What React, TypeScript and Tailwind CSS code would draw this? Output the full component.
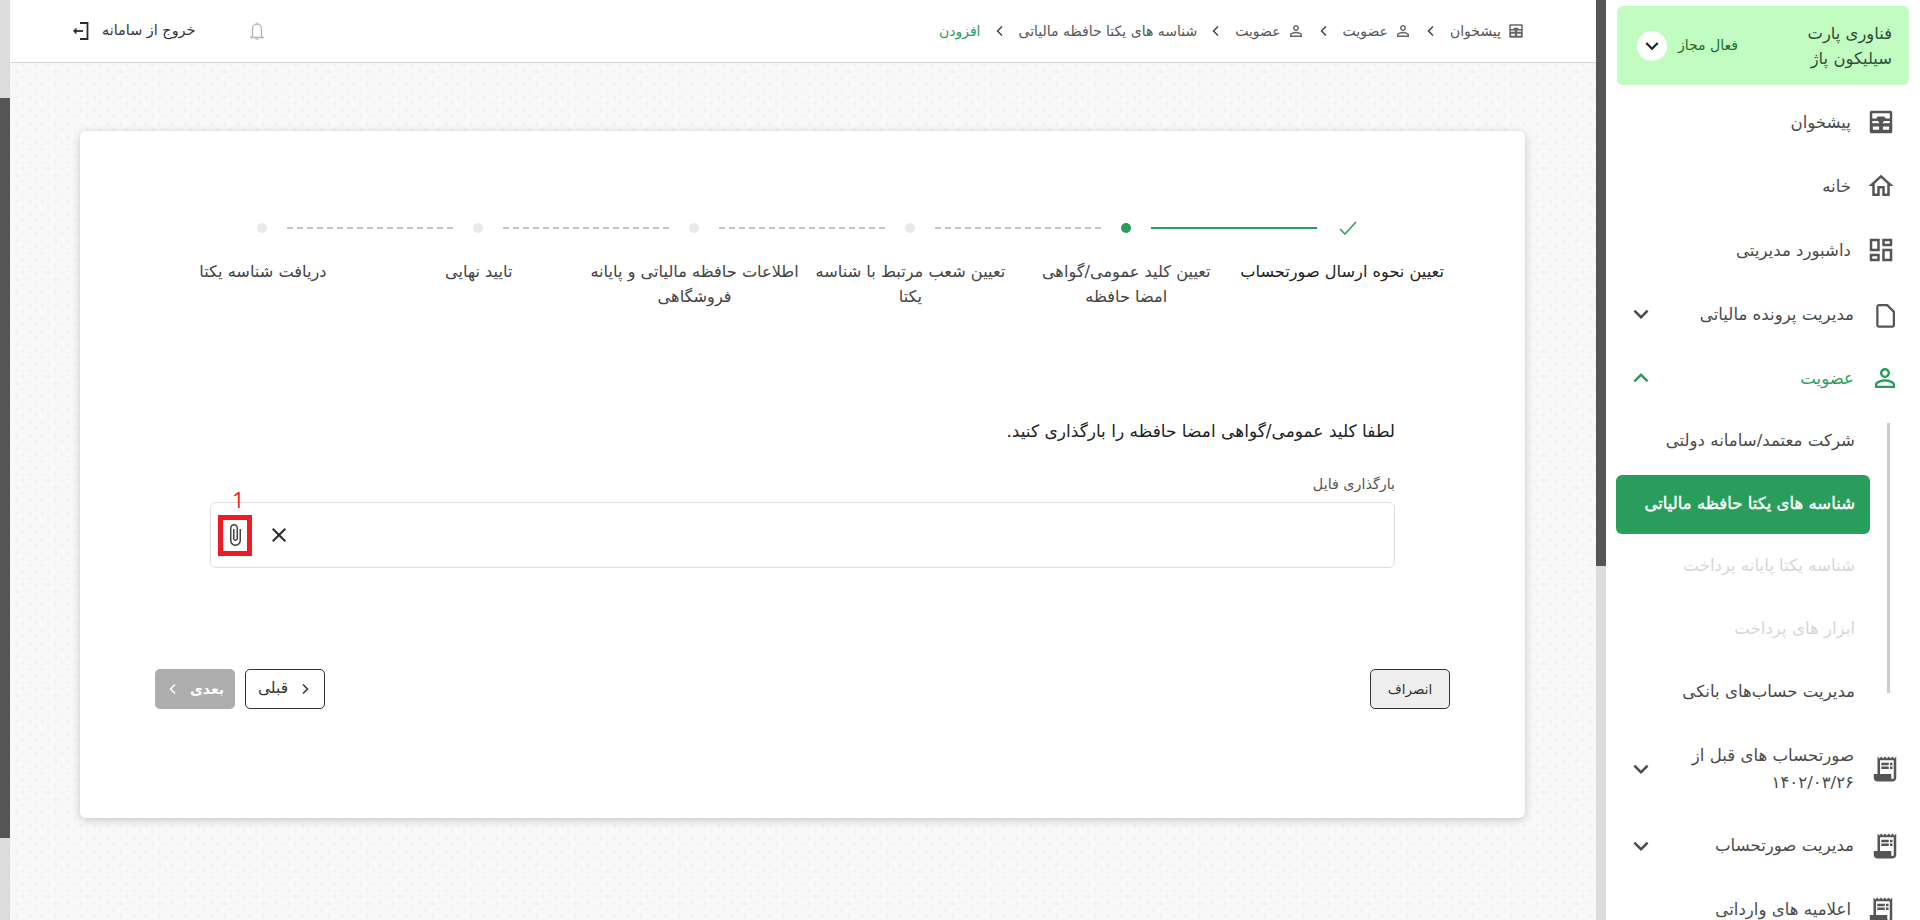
import React from "react";

const P = {
  home: "M12 5.69l5 4.5V18h-2v-6H9v6H7v-7.81l5-4.5M12 3L2 12h3v8h6v-6h2v6h6v-8h3L12 3z",
  dash: "M19 5v2h-4V5h4M9 5v6H5V5h4m10 8v6h-4v-6h4M9 17v2H5v-2h4M21 3h-8v6h8V3zM11 3H3v10h8V3zm10 8h-8v10h8V11zm-10 4H3v6h8v-6z",
  person:
    "M12 5.9c1.16 0 2.1.94 2.1 2.1s-.94 2.1-2.1 2.1S9.9 9.16 9.9 8s.94-2.1 2.1-2.1m0 9c2.97 0 6.1 1.46 6.1 2.1v1.1H5.9V17c0-.64 3.13-2.1 6.1-2.1M12 4C9.79 4 8 5.79 8 8s1.79 4 4 4 4-1.79 4-4-1.79-4-4-4zm0 9c-2.67 0-8 1.34-8 4v3h16v-3c0-2.66-5.33-4-8-4z",
  receipt:
    "M19.5 3.5 18 2l-1.5 1.5L15 2l-1.5 1.5L12 2l-1.5 1.5L9 2 7.5 3.5 6 2v14H3v3c0 1.66 1.34 3 3 3h12c1.66 0 3-1.34 3-3V2l-1.5 1.5zM19 19c0 .55-.45 1-1 1s-1-.45-1-1v-3H8V5h11v14zM15 7H9v2h6V7zM18 7h-2v2h2V7zM15 10H9v2h6v-2zM18 10h-2v2h2v-2z",
  file: "M14.2 4H7.2C6 4 5 5 5 6.2V21c0 1.1 1 2 2.2 2h10.6c1.2 0 2.2-.9 2.2-2V9.8L14.2 4zM18.2 21.2H6.8V5.8h6.6l4.8 4.8v10.6z",
  more: "M16.59 8.59 12 13.17 7.41 8.59 6 10l6 6 6-6z",
  less: "m12 8-6 6 1.41 1.41L12 10.83l4.59 4.58L18 14z",
  clip: "M16.5 6v11.5c0 2.21-1.79 4-4 4s-4-1.79-4-4V5c0-1.38 1.12-2.5 2.5-2.5s2.5 1.12 2.5 2.5v10.5c0 .55-.45 1-1 1s-1-.45-1-1V6H10v9.5c0 1.38 1.12 2.5 2.5 2.5s2.5-1.12 2.5-2.5V5c0-2.21-1.79-4-4-4S7 2.79 7 5v12.5c0 3.04 2.46 5.5 5.5 5.5s5.5-2.46 5.5-5.5V6h-1.5z",
  close:
    "M19 6.41 17.59 5 12 10.59 6.41 5 5 6.41 10.59 12 5 17.59 6.41 19 12 13.41 17.59 19 19 17.59 13.41 12z",
};

function Mi({ d, size = 30, className = "" }: { d: string; size?: number; className?: string }) {
  return (
    <svg width={size} height={size} viewBox="0 0 24 24" fill="currentColor" className={`shrink-0 ${className}`}>
      <path d={d} />
    </svg>
  );
}

function Chev({ dir, className = "" }: { dir: "left" | "right"; className?: string }) {
  return (
    <svg width="14" height="14" viewBox="0 0 14 14" fill="none" stroke="currentColor" strokeWidth="1.5" className={`shrink-0 ${className}`}>
      <path d={dir === "right" ? "M5 2.5 9.5 7 5 11.5" : "M9 2.5 4.5 7 9 11.5"} />
    </svg>
  );
}

function Desk({ size = 30, className = "" }: { size?: number; className?: string }) {
  return (
    <svg width={size} height={size} viewBox="0 0 24 24" fill="currentColor" className={`shrink-0 ${className}`}>
      <path
        fillRule="evenodd"
        d="M4.5 3h15A1.5 1.5 0 0 1 21 4.5v15a1.5 1.5 0 0 1-1.5 1.5h-15A1.5 1.5 0 0 1 3 19.5v-15A1.5 1.5 0 0 1 4.5 3zM5 5v4.2h3.2l1.2-1.7h5.2l1.2 1.7H19V5zM5 11.2V13h5.8l-1.2-1.8zM19 11.2h-4.6L13.2 13H19zM5.5 15.6v2.6h5v-2.6zM13.5 15.6v2.6h5v-2.6z"
      />
    </svg>
  );
}

function Step({ state, last }: { state: "done" | "active" | "todo"; last: boolean }) {
  return (
    <>
      <div className="flex h-5 w-5 shrink-0 items-center justify-center">
        {state === "done" && (
          <svg width="18" height="14" viewBox="0 0 18 14" fill="none" stroke="#299e5c" strokeWidth="1.5" className="shrink-0 translate-x-[6px]">
            <path d="M1 8l5 5L17 1" />
          </svg>
        )}
        {state === "active" && <span className="h-[10px] w-[10px] rounded-full bg-[#299e5c]" />}
        {state === "todo" && <span className="h-[10px] w-[10px] rounded-full bg-[#e8e8ee]" />}
      </div>
      {!last &&
        (state === "done" ? (
          <div className="mx-[15px] h-[2px] w-[166px] shrink-0 bg-[#299e5c]" />
        ) : (
          <div className="mx-[15px] h-0 w-[166px] shrink-0 border-t-2 border-dashed border-[#c4c4c4]" />
        ))}
    </>
  );
}

const steps: { s: "done" | "active" | "todo"; a: string; b?: string }[] = [
  { s: "done", a: "تعیین نحوه ارسال صورتحساب" },
  { s: "active", a: "تعیین کلید عمومی/گواهی", b: "امضا حافظه" },
  { s: "todo", a: "تعیین شعب مرتبط با شناسه", b: "یکتا" },
  { s: "todo", a: "اطلاعات حافظه مالیاتی و پایانه", b: "فروشگاهی" },
  { s: "todo", a: "تایید نهایی" },
  { s: "todo", a: "دریافت شناسه یکتا" },
];

function Crumb({ children, green }: { children: React.ReactNode; green?: boolean }) {
  return <span className={`text-[14px] ${green ? "text-[#299e5c]" : "text-[#555]"}`}>{children}</span>;
}

function Sep() {
  return <Chev dir="left" className="mx-[12px] text-[#444]" />;
}

function NavRow({
  icon,
  children,
  chevron,
  tall,
  green,
  inset,
}: {
  icon: React.ReactNode;
  children: React.ReactNode;
  chevron?: "more" | "less";
  tall?: boolean;
  green?: boolean;
  inset?: boolean;
}) {
  return (
    <div
      className={`flex shrink-0 items-center ${tall ? "h-[90px]" : "h-16"} ${inset ? "pr-6" : "pr-5"} pl-5 ${
        green ? "text-[#299e5c]" : "text-[#4a4a4a]"
      }`}
    >
      <span className={`${green ? "text-[#299e5c]" : "text-[#555]"} flex shrink-0`}>{icon}</span>
      <span className={`text-[16.6px] leading-[27px] ${inset ? "mr-[15px]" : "mr-4"}`}>{children}</span>
      {chevron && <Mi d={P[chevron]} className={`mr-auto ${green ? "text-[#299e5c]" : "text-[#4a4a4a]"}`} />}
    </div>
  );
}

function SubRow({ children, tone }: { children: React.ReactNode; tone?: "active" | "off" }) {
  if (tone === "active") {
    return (
      <div className="flex h-[62.75px] items-center">
        <div className="flex h-[59px] w-full items-center rounded-md bg-[#299e5c] pr-[15px] text-[16.5px] text-white [-webkit-text-stroke:0.4px_white]">{children}</div>
      </div>
    );
  }
  return (
    <div className={`flex h-[62.75px] items-center pr-[15px] text-[16.6px] ${tone === "off" ? "text-[#d6d6d6]" : "text-[#4a4a4a]"}`}>{children}</div>
  );
}

export default function App() {
  return (
    <div dir="ltr" className="flex h-[920px] w-[1920px] overflow-hidden bg-white font-['DejaVu_Sans',sans-serif]">
      {/* left scrollbar */}
      <div className="flex w-[10px] shrink-0 flex-col bg-[#dcdcdc]">
        <div className="h-[98px] shrink-0" />
        <div className="h-[740px] shrink-0 bg-[#555]" />
      </div>

      {/* main */}
      <div className="flex min-w-0 flex-1 flex-col bg-[#f7f8f7] bg-[radial-gradient(#eff0ef_1px,transparent_1.5px),radial-gradient(#f0f1f0_1px,transparent_1.5px)] bg-[length:13px_13px] bg-[position:0_0,6px_6px]">
        <header className="flex h-[63px] shrink-0 items-center justify-between border-b border-[#d6d6d6] bg-white pl-[61px] pr-[71px]">
          <div className="flex items-center">
            <svg width="18" height="18" viewBox="0 0 18 18" fill="none" stroke="#2b2b2b" strokeWidth="1.8" className="shrink-0">
              <path d="M9 1h7.5v16H9" />
              <path d="M12 9H3" />
              <path d="M5.5 5.5 2 9l3.5 3.5" fill="#2b2b2b" stroke="none" />
            </svg>
            <span dir="rtl" className="ml-[13px] text-[14.4px] text-[#333]">خروج از سامانه</span>
            <svg width="20" height="20" viewBox="0 0 20 20" fill="none" stroke="#b4b4b4" strokeWidth="1.3" className="ml-[52px] shrink-0">
              <path d="M10 1.5V3M5.5 15V8a4.5 5 0 0 1 9 0v7l1.5 1.5H4z" />
              <path d="M8.5 18h3" />
            </svg>
          </div>
          <nav dir="rtl" className="flex items-center">
            <Desk size={18} className="ml-[6px] text-[#666]" />
            <Crumb>پیشخوان</Crumb>
            <Sep />
            <Mi d={P.person} size={18} className="ml-[6px] text-[#666]" />
            <Crumb>عضویت</Crumb>
            <Sep />
            <Mi d={P.person} size={18} className="ml-[6px] text-[#666]" />
            <Crumb>عضویت</Crumb>
            <Sep />
            <Crumb>شناسه های یکتا حافظه مالیاتی</Crumb>
            <Sep />
            <Crumb green>افزودن</Crumb>
          </nav>
        </header>

        <div className="px-[70px] pt-[68px]">
          <section dir="rtl" className="h-[687px] w-[1445px] rounded-md bg-white px-[75px] pt-[87px] shadow-[0_2px_10px_rgba(0,0,0,0.2)]">
            <div className="flex h-5 items-center px-[98px]">
              {steps.map((st, i) => (
                <Step key={i} state={st.s} last={i === steps.length - 1} />
              ))}
            </div>
            <div className="mt-[22px] grid h-[50px] grid-cols-6">
              {steps.map((st, i) => (
                <div key={i} className="text-center text-[16.2px] leading-[24.5px] text-[#444] first:text-[#222]">
                  {st.a}
                  {st.b && <br />}
                  {st.b}
                </div>
              ))}
            </div>

            <div className="mx-[55px] mt-[109px]">
              <p className="text-[17px] leading-6 text-[#222]">لطفا کلید عمومی/گواهی امضا حافظه را بارگذاری کنید.</p>
              <label className="mt-[31px] block text-[14.3px] leading-5 text-[#555]">بارگذاری فایل</label>
              <div dir="ltr" className="mt-2 flex h-[66px] items-center rounded-md border border-[#dedede] pl-[7px]">
                <div className="relative flex h-[41px] w-[34px] shrink-0 items-center justify-center border-[5px] border-[#ed1c24]">
                  <Mi d={P.clip} size={24} className="text-[#444]" />
                  <span className="absolute left-[9px] top-[-36px] font-['Open_Sans',sans-serif] text-[22px] leading-[30px] text-[#ed1c24]">1</span>
                </div>
                <Mi d={P.close} size={24} className="ml-[15px] text-[#2b2b2b]" />
              </div>
            </div>

            <div className="mt-[101px] flex items-center justify-between">
              <button className="flex h-10 w-20 items-center justify-center rounded-[5px] border border-[#333] bg-[#eeeeee] text-[13.5px] text-[#333]">انصراف</button>
              <div className="flex items-center gap-[10px]">
                <button className="flex h-10 w-20 items-center justify-center gap-[10px] rounded-[5px] border border-[#333] text-[15.5px] text-[#333]">
                  <Chev dir="right" />
                  قبلی
                </button>
                <button className="flex h-10 w-20 items-center justify-center gap-[10px] rounded-[5px] bg-[#adadad] text-[14px] font-bold text-white">
                  بعدی
                  <Chev dir="left" />
                </button>
              </div>
            </div>
          </section>
        </div>
      </div>

      {/* right scrollbar */}
      <div className="flex w-[10px] shrink-0 flex-col bg-[#dcdcdc]">
        <div className="h-[566px] shrink-0 bg-[#555]" />
      </div>

      {/* sidebar */}
      <aside dir="rtl" className="flex h-[920px] w-[314px] shrink-0 flex-col overflow-hidden bg-white">
        <div className="mx-[11px] mt-[6px] flex h-[79px] shrink-0 items-center rounded-md bg-[#c1fcc1] pl-5 pr-[17px]">
          <div className="text-[16.4px] leading-[25px] text-[#2f4f35]">
            فناوری پارت
            <br />
            سیلیکون پاژ
          </div>
          <span className="mr-auto text-[14px] text-[#1b6b2c]">فعال مجاز</span>
          <span className="mr-[11px] flex h-[30px] w-[30px] shrink-0 items-center justify-center rounded-full bg-white text-[#222]">
            <Mi d={P.more} size={26} />
          </span>
        </div>

        <div className="mt-[5px] flex flex-col">
          <NavRow inset icon={<Desk />}>پیشخوان</NavRow>
          <NavRow inset icon={<Mi d={P.home} />}>خانه</NavRow>
          <NavRow inset icon={<Mi d={P.dash} />}>داشبورد مدیریتی</NavRow>
          <NavRow icon={<Mi d={P.file} />} chevron="more">مدیریت پرونده مالیاتی</NavRow>
          <NavRow green icon={<Mi d={P.person} />} chevron="less">عضویت</NavRow>
          <div className="flex shrink-0">
            <div className="mb-[31px] mr-[30px] mt-[13px] w-[3px] shrink-0 bg-[#cccccc]" />
            <div className="mr-[17px] min-w-0 flex-1 pl-[10px]">
              <SubRow>شرکت معتمد/سامانه دولتی</SubRow>
              <SubRow tone="active">شناسه های یکتا حافظه مالیاتی</SubRow>
              <SubRow tone="off">شناسه یکتا پایانه پرداخت</SubRow>
              <SubRow tone="off">ابزار های پرداخت</SubRow>
              <SubRow>مدیریت حساب‌های بانکی</SubRow>
            </div>
          </div>
          <NavRow tall icon={<Mi d={P.receipt} />} chevron="more">
            صورتحساب های قبل از
            <br />
            ۱۴۰۲/۰۳/۲۶
          </NavRow>
          <NavRow icon={<Mi d={P.receipt} />} chevron="more">مدیریت صورتحساب</NavRow>
          <NavRow inset icon={<Mi d={P.receipt} />}>اعلامیه های وارداتی</NavRow>
        </div>
      </aside>
    </div>
  );
}
